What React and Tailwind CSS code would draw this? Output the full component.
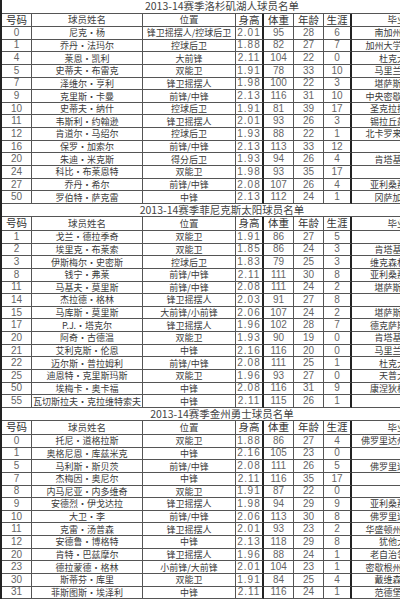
import React from 'react';

const CJK = "font-['Noto_Sans_CJK_SC',sans-serif]";
const NUM = "font-['Liberation_Sans',Arial,sans-serif]";

const TABLES = [
  {
    title: '2013-14赛季洛杉矶湖人球员名单',
    rows: [
      ['0', '尼克·杨', '锋卫摇摆人/控球后卫', '2.01', '95', '28', '6', '南加州大学'],
      ['1', '乔丹·法玛尔', '控球后卫', '1.88', '82', '27', '7', '加州大学洛杉矶'],
      ['4', '莱恩·凯利', '大前锋', '2.11', '104', '22', '0', '杜克大学'],
      ['5', '史蒂夫·布雷克', '双能卫', '1.91', '78', '33', '10', '马里兰大学'],
      ['7', '泽维尔·亨利', '锋卫摇摆人', '1.98', '100', '22', '3', '堪萨斯大学'],
      ['9', '克里斯·卡曼', '前锋/中锋', '2.13', '116', '31', '10', '中央密歇根大学'],
      ['10', '史蒂夫·纳什', '控球后卫', '1.91', '81', '39', '17', '圣克拉拉大学'],
      ['11', '韦斯利·约翰逊', '锋卫摇摆人', '2.01', '93', '26', '3', '锡拉丘兹大学'],
      ['12', '肯道尔·马绍尔', '控球后卫', '1.93', '88', '22', '1', '北卡罗来纳大学'],
      ['16', '保罗·加索尔', '前锋/中锋', '2.13', '113', '33', '12', ''],
      ['20', '朱迪·米克斯', '得分后卫', '1.93', '94', '26', '4', '肯塔基大学'],
      ['24', '科比·布莱恩特', '双能卫', '1.98', '93', '35', '17', ''],
      ['27', '乔丹·希尔', '前锋/中锋', '2.08', '107', '26', '4', '亚利桑那大学'],
      ['50', '罗伯特·萨克雷', '中锋', '2.13', '112', '24', '1', '冈萨加大学'],
    ],
  },
  {
    title: '2013-14赛季菲尼克斯太阳球员名单',
    rows: [
      ['1', '戈兰·德拉季奇', '双能卫', '1.91', '86', '27', '5', ''],
      ['2', '埃里克·布莱索', '双能卫', '1.85', '86', '24', '3', '肯塔基大学'],
      ['3', '伊斯梅尔·史密斯', '控球后卫', '1.83', '79', '25', '3', '维克森林大学'],
      ['8', '钱宁·弗莱', '前锋/中锋', '2.11', '111', '30', '8', '亚利桑那大学'],
      ['11', '马基夫·莫里斯', '前锋/中锋', '2.08', '111', '24', '2', '堪萨斯大学'],
      ['14', '杰拉德·格林', '锋卫摇摆人', '2.03', '91', '27', '8', ''],
      ['15', '马库斯·莫里斯', '大前锋/小前锋', '2.06', '107', '24', '2', '堪萨斯大学'],
      ['17', 'P.J.·塔克尔', '锋卫摇摆人', '1.96', '102', '28', '7', '德克萨斯大学'],
      ['20', '阿奇·古德温', '双能卫', '1.93', '90', '19', '0', '肯塔基大学'],
      ['21', '艾利克斯·伦恩', '中锋', '2.16', '116', '20', '0', '马里兰大学'],
      ['22', '迈尔斯·普拉姆利', '前锋/中锋', '2.08', '111', '25', '1', '杜克大学'],
      ['25', '迪恩特·克里斯玛斯', '双能卫', '1.96', '93', '27', '0', '天普大学'],
      ['50', '埃梅卡·奥卡福', '中锋', '2.08', '116', '31', '9', '康涅狄格大学'],
      ['55', '瓦切斯拉夫·克拉维特索夫', '中锋', '2.11', '115', '26', '1', ''],
    ],
  },
  {
    title: '2013-14赛季金州勇士球员名单',
    rows: [
      ['0', '托尼·道格拉斯', '双能卫', '1.88', '86', '27', '4', '佛罗里达州立大学'],
      ['1', '奥格尼恩·库兹米克', '中锋', '2.16', '105', '23', '0', ''],
      ['5', '马利斯·斯贝茨', '前锋/中锋', '2.08', '111', '26', '5', '佛罗里达大学'],
      ['7', '杰梅因·奥尼尔', '中锋', '2.11', '116', '35', '17', ''],
      ['8', '内马尼亚·内多维奇', '双能卫', '1.91', '87', '22', '0', ''],
      ['9', '安德烈·伊戈达拉', '锋卫摇摆人', '1.98', '94', '29', '9', '亚利桑那大学'],
      ['10', '大卫·李', '前锋/中锋', '2.06', '113', '30', '8', '佛罗里达大学'],
      ['11', '克雷·汤普森', '锋卫摇摆人', '2.01', '93', '23', '2', '华盛顿州立大学'],
      ['12', '安德鲁·博格特', '中锋', '2.13', '118', '29', '8', '犹他大学'],
      ['20', '肯特·巴兹摩尔', '锋卫摇摆人', '1.96', '88', '24', '1', '老自治领大学'],
      ['23', '德拉蒙德·格林', '小前锋/大前锋', '2.01', '104', '23', '1', '密歇根州立大学'],
      ['30', '斯蒂芬·库里', '双能卫', '1.91', '84', '25', '4', '戴维森学院'],
      ['31', '菲斯图斯·埃泽利', '中锋', '2.11', '116', '24', '1', '范德堡大学'],
    ],
  },
];

const HEADERS = ['号码', '球员姓名', '位置', '身高', '体重', '年龄', '生涯', '毕业'];

// right border per column: thick after 身高 and 生涯
const RB = [
  'border-r border-[#555]',
  'border-r border-[#555]',
  'border-r border-[#555]',
  'border-r-2 border-[#222]',
  'border-r border-[#555]',
  'border-r border-[#555]',
  'border-r-2 border-[#222]',
  '',
];

function Cell({ col, children, kind }) {
  let font;
  if (kind === 'head') {
    font = col === 1 || col === 2 || col === 7 ? `${CJK} text-[9.5px] text-[#444]` : `${CJK} text-[10.5px] text-[#333]`;
  } else if (col === 1 || col === 2 || col === 7) {
    font = `${CJK} text-[9px] text-[#3a3a3a]`;
  } else if (col === 3) {
    font = `${NUM} text-[10px] tracking-[1px] text-[#666]`;
  } else {
    font = `${NUM} text-[10px] text-[#666]`;
  }
  return (
    <div className={`${RB[col]} border-b border-b-[#555] flex items-center justify-center whitespace-nowrap leading-none ${font}`}>
      {children}
    </div>
  );
}

function Roster({ title, rows }) {
  return (
    <div className="grid grid-cols-[30px_111px_93px_28px_30px_30px_28px_90px] border-l-2 border-[#222]">
      <div className={`col-span-8 h-[13.5px] border-b border-[#555] flex items-center justify-center leading-none ${CJK} text-[10.5px] text-[#444]`}>
        {title}
      </div>
      {HEADERS.map((h, i) => (
        <div key={h} className="h-[13.5px] grid">
          <Cell col={i} kind="head">{h}</Cell>
        </div>
      ))}
      {rows.map((r) =>
        r.map((v, i) => (
          <div key={r[0] + '-' + i} className="h-[12.65px] grid">
            <Cell col={i}>{v}</Cell>
          </div>
        ))
      )}
    </div>
  );
}

export default function App() {
  return (
    <div className="w-[400px] h-[600px] overflow-hidden bg-white text-[#333]">
      <div className="w-[444px]">
        {TABLES.map((t) => (
          <Roster key={t.title} title={t.title} rows={t.rows} />
        ))}
      </div>
    </div>
  );
}
